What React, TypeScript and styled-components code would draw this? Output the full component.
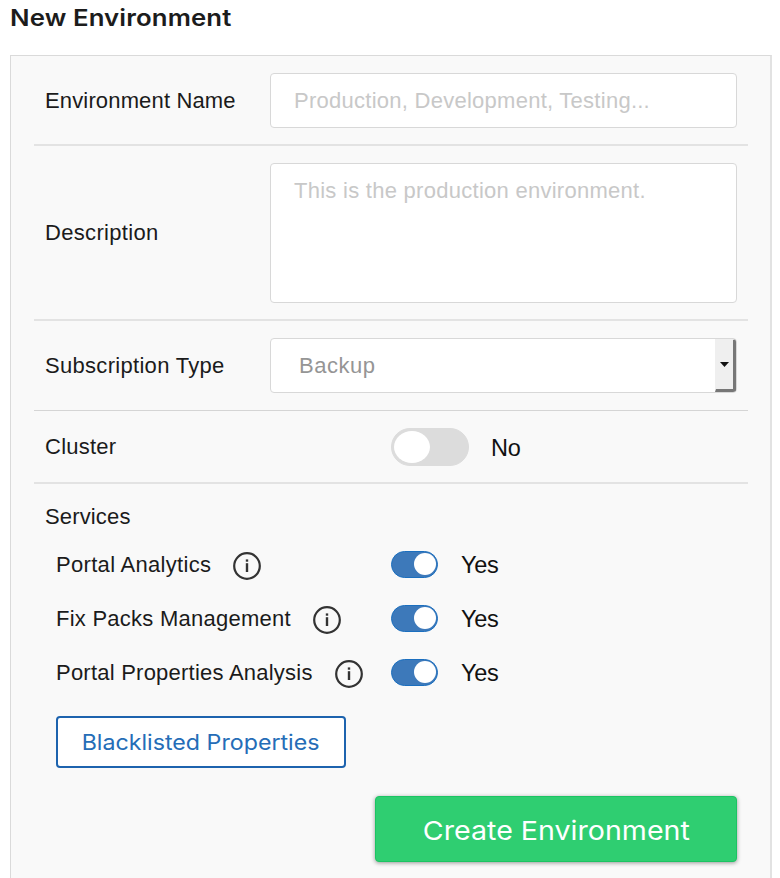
import React, { useState } from "react";
import styled, { createGlobalStyle } from "styled-components";

const GlobalStyle = createGlobalStyle`
  * { box-sizing: border-box; }
  body {
    margin: 0;
    background: #fff;
    color: #1b1b1b;
    font-family: "Liberation Sans", Arial, sans-serif;
    overflow: hidden;
  }
`;

const Page = styled.main`
  height: 878px;
  padding: 0 8px 0 10px;
  display: flex;
  flex-direction: column;
  overflow: hidden;
`;

const Title = styled.h1`
  margin: 0;
  height: 55px;
  flex: none;
  padding-top: 3px;
  font: 600 23px/30px Inter, sans-serif;
  letter-spacing: 0.1px;
  color: #1c1c1c;
  white-space: nowrap;
  transform: scaleX(1.12);
  transform-origin: 0 0;
`;

const Panel = styled.form`
  flex: 1;
  display: flex;
  flex-direction: column;
  padding: 0 22px 0 23px;
  background: #f9f9f9;
  border: 1px solid #dadada;
  border-right: 2px solid #e2e2e2;
  border-bottom: 0;
`;

const Row = styled.div<{ $height: number; $soft?: boolean }>`
  flex: none;
  display: grid;
  grid-template-columns: 236px 467px;
  align-items: center;
  height: ${(p) => p.$height}px;
  border-bottom: ${(p) => (p.$soft ? "2px solid #e3e3e3" : "1px solid #d5d5d5")};
`;

const Label = styled.label<{ $spacing?: number }>`
  padding: 1px 0 0 11px;
  font-size: 22px;
  line-height: 28px;
  letter-spacing: ${(p) => p.$spacing ?? 0.15}px;
  white-space: nowrap;
`;

const TextInput = styled.input`
  width: 467px;
  height: 55px;
  padding: 2px 23px 0;
  border: 1px solid #d8d8d8;
  border-radius: 4px;
  background: #fff;
  font: 22px "Liberation Sans", Arial, sans-serif;
  letter-spacing: 0.26px;
  outline: 0;
  &::placeholder { color: #c8c8c8; opacity: 1; }
`;

const TextArea = styled.textarea`
  display: block;
  width: 467px;
  height: 140px;
  padding: 13px 23px;
  border: 1px solid #d8d8d8;
  border-radius: 4px;
  background: #fff;
  font: 22px/28px "Liberation Sans", Arial, sans-serif;
  letter-spacing: 0.27px;
  resize: none;
  outline: 0;
  &::placeholder { color: #c8c8c8; opacity: 1; }
`;

const SelectBox = styled.button`
  display: flex;
  align-items: stretch;
  justify-content: space-between;
  width: 467px;
  height: 55px;
  padding: 0 0 0 28px;
  border: 1px solid #d8d8d8;
  border-radius: 4px;
  background: #fff;
  color: #959595;
  font: 22px/54px "Liberation Sans", Arial, sans-serif;
  letter-spacing: 0.5px;
`;

const SelectArrow = styled.span`
  display: flex;
  align-items: center;
  justify-content: center;
  width: 21px;
  background: #efefef;
  border-right: 3px solid #777;
  border-bottom: 3px solid #777;
  border-top: 1px solid #efefef;
  border-left: 1px solid #efefef;
  border-radius: 0 3px 3px 0;
`;

const ToggleGroup = styled.div<{ $large?: boolean }>`
  display: flex;
  align-items: center;
  gap: ${(p) => (p.$large ? 22 : 23)}px;
  padding-left: ${(p) => (p.$large ? 121 : 0)}px;
`;

const Track = styled.button<{ $on: boolean; $large?: boolean }>`
  display: flex;
  align-items: center;
  justify-content: ${(p) => (p.$on ? "flex-end" : "flex-start")};
  width: ${(p) => (p.$large ? 78 : 47)}px;
  height: ${(p) => (p.$large ? 38 : 27)}px;
  padding: ${(p) => (p.$large ? "0 2px" : "0 1px")};
  border: 1px solid ${(p) => (p.$on ? "#1b6fbf" : "#dcdcdc")};
  border-radius: 20px;
  background: ${(p) => (p.$on ? "#3d79ba" : "#dcdcdc")};
`;

const Knob = styled.span<{ $large?: boolean }>`
  width: ${(p) => (p.$large ? 36 : 22)}px;
  height: ${(p) => (p.$large ? 32 : 22)}px;
  border-radius: 50%;
  background: #fff;
`;

const ToggleText = styled.span`
  padding-top: 2px;
  font-size: 23.5px;
  line-height: 30px;
  letter-spacing: -0.25px;
  color: #111;
`;

const Services = styled.section`
  display: flex;
  flex-direction: column;
  flex: none;
  padding-top: 18px;
`;

const ServiceList = styled.div`
  padding: 6px 0 0 22px;
`;

const ServiceRow = styled.div`
  display: grid;
  grid-template-columns: 335px 1fr;
  align-items: center;
  height: 54px;
`;

const ServiceName = styled.div`
  display: flex;
  align-items: center;
  gap: 22px;
  font-size: 22px;
  line-height: 28px;
  white-space: nowrap;
`;

const NameText = styled.span<{ $spacing: number }>`
  padding-top: 2px;
  letter-spacing: ${(p) => p.$spacing}px;
`;

const InfoIcon = styled.svg`
  flex: none;
  margin-top: 4px;
`;

const WideText = styled.span<{ $scale: number }>`
  display: inline-block;
  transform: scaleX(${(p) => p.$scale});
`;

const OutlineButton = styled.button`
  width: 290px;
  height: 52px;
  margin: 17px 0 0 22px;
  padding: 0 0 1px;
  border: 2px solid #1d63ae;
  border-radius: 4px;
  background: #fff;
  color: #256db7;
  font: 400 21.2px Inter, sans-serif;
  white-space: nowrap;
`;

const PrimaryButton = styled.button`
  flex: none;
  align-self: flex-end;
  width: 362px;
  height: 66px;
  margin: 28px 11px 0 0;
  padding: 2px 0 0;
  border: 1px solid #1bc463;
  border-radius: 4px;
  background: #2fce71;
  box-shadow: 0 1px 4px rgba(0, 0, 0, 0.4);
  color: #fff;
  font: 400 26px Inter, sans-serif;
  white-space: nowrap;
`;

interface ToggleProps {
  initial: boolean;
  large?: boolean;
  label: string;
}

function Toggle({ initial, large, label }: ToggleProps) {
  const [on, setOn] = useState(initial);
  return (
    <ToggleGroup $large={large}>
      <Track type="button" role="switch" aria-checked={on} aria-label={label} $on={on} $large={large} onClick={() => setOn(!on)}>
        <Knob $large={large} />
      </Track>
      <ToggleText>{on ? "Yes" : "No"}</ToggleText>
    </ToggleGroup>
  );
}

function Info() {
  return (
    <InfoIcon width="28" height="28" viewBox="0 0 28 28" fill="none">
      <circle cx="14" cy="14" r="12.8" stroke="#333" strokeWidth="2.2" />
      <path d="M14 11.2V20" stroke="#333" strokeWidth="2.4" />
      <path d="M14 7.4V9.7" stroke="#333" strokeWidth="2.4" />
    </InfoIcon>
  );
}

const services = [
  { name: "Portal Analytics", spacing: 0.31 },
  { name: "Fix Packs Management", spacing: 0.25 },
  { name: "Portal Properties Analysis", spacing: 0.23 },
];

export default function App() {
  return (
    <>
      <GlobalStyle />
      <Page>
        <Title>New Environment</Title>
        <Panel>
          <Row $height={90} $soft>
            <Label htmlFor="name">Environment Name</Label>
            <TextInput id="name" placeholder="Production, Development, Testing..." />
          </Row>
          <Row $height={175} $soft>
            <Label htmlFor="description" $spacing={0.32}>Description</Label>
            <TextArea id="description" placeholder="This is the production environment." />
          </Row>
          <Row $height={90}>
            <Label $spacing={0.3}>Subscription Type</Label>
            <SelectBox type="button">
              <span>Backup</span>
              <SelectArrow>
                <svg width="9" height="5" viewBox="0 0 9 5">
                  <path d="M0 0H9L4.5 5Z" fill="#111" />
                </svg>
              </SelectArrow>
            </SelectBox>
          </Row>
          <Row $height={73} $soft>
            <Label $spacing={0.25}>Cluster</Label>
            <Toggle initial={false} large label="Cluster" />
          </Row>
          <Services>
            <Label as="div">Services</Label>
            <ServiceList>
              {services.map((s) => (
                <ServiceRow key={s.name}>
                  <ServiceName>
                    <NameText $spacing={s.spacing}>{s.name}</NameText>
                    <Info />
                  </ServiceName>
                  <Toggle initial label={s.name} />
                </ServiceRow>
              ))}
            </ServiceList>
            <OutlineButton type="button">
              <WideText $scale={1.095}>Blacklisted Properties</WideText>
            </OutlineButton>
          </Services>
          <PrimaryButton type="button">
            <WideText $scale={1.1}>Create Environment</WideText>
          </PrimaryButton>
        </Panel>
      </Page>
    </>
  );
}
